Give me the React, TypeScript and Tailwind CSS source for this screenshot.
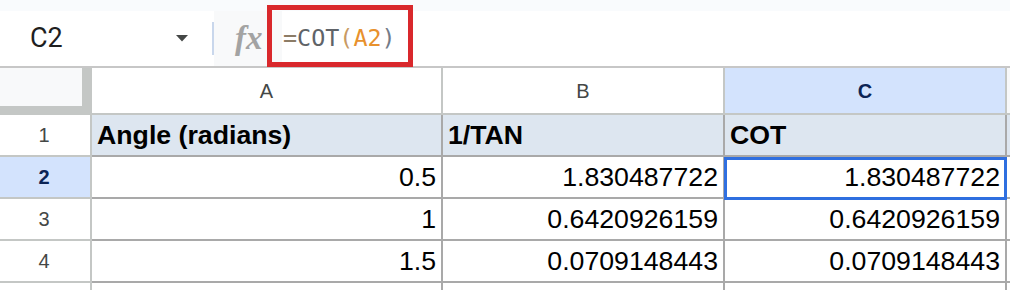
import React from 'react';

const cols = [
  { key: 'A', w: 'w-[351px]' },
  { key: 'B', w: 'w-[282px]' },
  { key: 'C', w: 'w-[282px]' },
];

const rows = [
  { n: '1', cells: ['Angle (radians)', '1/TAN', 'COT'], head: true },
  { n: '2', cells: ['0.5', '1.830487722', '1.830487722'] },
  { n: '3', cells: ['1', '0.6420926159', '0.6420926159'] },
  { n: '4', cells: ['1.5', '0.0709148443', '0.0709148443'] },
  // partial row cut by the window edge, number not visible
  { n: '', cells: ['', '', ''] },
];

export default function App() {
  return (
    <div className="relative w-[1010px] h-[290px] overflow-hidden bg-white font-['Liberation_Sans',Arial,sans-serif]">
      {/* top strip */}
      <div className="h-[11px] bg-[#f9fbfd]" />

      {/* formula bar */}
      <div className="flex h-[55px]">
        <div className="flex w-[212px] items-center justify-between bg-white pl-[30px] pr-[24px]">
          <span className="font-['Roboto',sans-serif] text-[27px] text-[#1f1f1f]">C2</span>
          <svg width="12" height="7" viewBox="0 0 12 7">
            <path d="M0 0 L12 0 L6 6.5 Z" fill="#444746" />
          </svg>
        </div>
        <div className="flex items-center bg-white">
          <div className="h-[33px] w-[2px] bg-[#c9d7ec]" />
        </div>
        <div className="flex w-[68px] items-center bg-[#f8f9fa] pl-[21px]">
          <span className="font-['Liberation_Serif',serif] text-[33px] font-bold italic leading-none text-[#a3a3a3]">
            fx
          </span>
        </div>
        <div className="flex flex-1 items-center bg-white pl-[1px] font-['DejaVu_Sans_Mono',monospace] text-[23.4px]">
          <span className="text-[#8c7c66]">=</span>
          <span className="text-[#5f6368]">COT</span>
          <span className="text-[#c99a63]">(</span>
          <span className="text-[#e8912d]">A2</span>
          <span className="text-[#737b88]">)</span>
        </div>
      </div>
      <div className="h-[2px] bg-[#c7c7c7]" />

      {/* column headers */}
      <div className="flex h-[47px]">
        <div className="w-[92px] bg-[#c4c7c5] pr-[10px] pb-[9px]">
          <div className="h-full w-full bg-[#f8f9fa]" />
        </div>
        {cols.map(c => (
          <div
            key={c.key}
            className={`${c.w} flex items-center justify-center border-r-2 border-b-2 border-[#c4c7c5] text-[20px] ${
              c.key === 'C' ? 'bg-[#d3e3fd] font-bold text-[#0b2455]' : 'text-[#444746]'
            }`}
          >
            {c.key}
          </div>
        ))}
        <div className="flex-1 border-b-2 border-[#c4c7c5] bg-[#f8f9fa]" />
      </div>

      {/* data rows */}
      {rows.map((r, ri) => (
        <div key={ri} className="flex h-[42px]">
          <div
            className={`flex w-[92px] items-center justify-center border-r-2 border-b-2 border-[#c4c7c5] pr-[2px] text-[20px] ${
              r.n === '2' ? 'bg-[#d3e3fd] font-bold text-[#0b2455]' : 'text-[#444746]'
            }`}
          >
            {r.n}
          </div>
          {cols.map((c, i) => (
            <div
              key={c.key}
              className={`${c.w} flex items-center border-r-2 border-b-2 border-[#a9a9a9] text-[26.7px] text-black ${
                r.head ? 'justify-start bg-[#dde6f0] pl-[5px] font-bold' : 'justify-end pr-[5px]'
              }`}
            >
              {r.cells[i]}
            </div>
          ))}
          <div className={`flex-1 border-b-2 border-[#a9a9a9] ${r.head ? 'bg-[#dde6f0]' : ''}`} />
        </div>
      ))}

      {/* annotation around formula */}
      <div className="absolute left-[267px] top-[5px] h-[62px] w-[146px] border-[5px] border-[#d9282c]" />

      {/* active cell C2 */}
      <div className="absolute left-[724px] top-[157px] h-[43px] w-[283px] border-[3px] border-[#2f6fe0]" />
    </div>
  );
}
